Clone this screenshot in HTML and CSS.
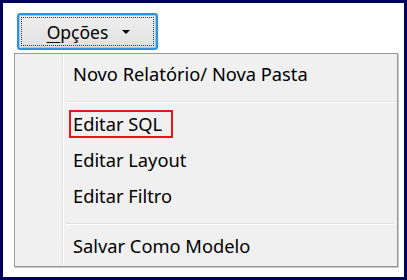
FILE: index.html
```html
<!DOCTYPE html>
<html>
<head>
<meta charset="utf-8">
<link rel="stylesheet" href="styles.css">
</head>
<body>
<div class="frame">
  <div class="btn">
    <div class="focus">
      <span class="label"><span class="ul">O</span>pções</span>
      <svg class="arrow" width="8" height="4" viewBox="0 0 8 4"><path d="M0 0H8L4 4Z" fill="#000"/></svg>
    </div>
  </div>
  <div class="menu">
    <div class="item"><span class="txt">Novo Relatório/ Nova Pasta</span></div>
    <div class="sep"></div>
    <div class="item"><span class="txt mark">Editar SQL</span></div>
    <div class="item"><span class="txt">Editar Layout</span></div>
    <div class="item"><span class="txt">Editar Filtro</span></div>
    <div class="sep"></div>
    <div class="item"><span class="txt">Salvar Como Modelo</span></div>
  </div>
</div>
</body>
</html>
```
FILE: styles.css
```css
html, body { margin: 0; padding: 0; background: #fff; }
body { font-family: "Noto Sans", "Open Sans", sans-serif; color: #000; }
.frame {
  width: 407px; height: 280px; box-sizing: border-box;
  border: 3px solid #00005c;
  padding: 10px 0 0 11px;
  background: #fff;
}
.btn {
  width: 141px; height: 37px; box-sizing: border-box;
  margin-left: 3px;
  border: 2px solid #2f93dc;
  border-radius: 3px;
  background: linear-gradient(#f0f0f0, #e0e0e0);
  padding: 2px;
  box-shadow: inset 0 0 0 1px #8fcdf3;
}
.focus {
  height: 100%; box-sizing: border-box;
  border: 1px dotted #333;
  display: flex; align-items: center; justify-content: center; gap: 14px;
  padding-left: 2px;
}
.label { font-size: 17.5px; line-height: 20px; }
.ul { text-decoration: underline; text-underline-offset: 3px; }
.arrow { display: block; margin-top: 1px; }
.menu {
  margin-top: 3px;
  width: 384px; height: 214px; box-sizing: border-box;
  border: 1px solid #979797;
  box-shadow: 1px 1px 0 #c8c8c8;
  background: linear-gradient(to right, #f0f0f0 47px, #e2e3e3 47px, #e2e3e3 48px, #fff 48px, #fff 49px, #f0f0f0 49px);
  padding: 2px 3px 2px 2px;
}
.item {
  height: 36px; display: flex; align-items: center;
  padding-left: 56px;
  font-size: 18.3px;
}
.txt { line-height: 20px; }
.mark {
  border: 2px solid #e8141b;
  padding: 2px 9px 2px 2px;
  margin-left: -4px;
}
.sep {
  height: 14px; box-sizing: border-box;
  margin-left: 49px;
  padding-top: 9px;
}
.sep::before {
  content: ""; display: block; height: 1px;
  background: #e0e0e0; border-bottom: 1px solid #fff;
}
```
